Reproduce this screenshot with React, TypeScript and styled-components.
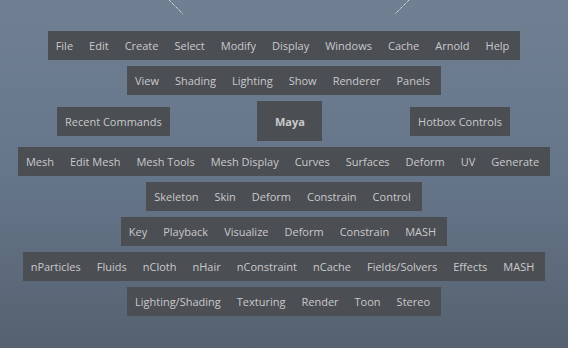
import React from "react";
import styled, {createGlobalStyle} from "styled-components";

const GlobalStyle = createGlobalStyle`
  html, body {
    margin: 0;
    padding: 0;
  }
  body {
    font-family: "Open Sans", "Noto Sans", sans-serif;
  }
`

const Screen = styled.div`
  position: relative;
  width: 568px;
  height: 348px;
  overflow: hidden;
  box-sizing: border-box;
  padding-top: 31px;
  background: linear-gradient(180deg, #707f92 0%, #66768a 50%, #556170 100%);
  display: flex;
  flex-direction: column;
  align-items: center;
  row-gap: 6px;
`

const Guides = styled.svg`
  position: absolute;
  left: 0;
  top: 0;
  width: 568px;
  height: 20px;
  pointer-events: none;
`

const Bar = styled.div`
  display: flex;
  height: 29px;
  align-items: center;
  padding: 0 3px 0 0;
  background: #4b4e53;
`

const Item = styled.span`
  padding: 0 8px;
  font-size: 11px;
  line-height: 29px;
  color: #c9cacb;
  white-space: nowrap;
`

const CenterRow = styled.div`
  width: 568px;
  height: 40px;
  display: flex;
  align-items: center;
  box-sizing: border-box;
  padding: 0 58px 0 57px;
  justify-content: space-between;
`

const Tile = styled.div<{ $big?: boolean }>`
  display: flex;
  align-items: center;
  justify-content: center;
  height: ${p => (p.$big ? "40px" : "29px")};
  width: ${p => (p.$big ? "65px" : "auto")};
  padding: ${p => (p.$big ? "0" : "0 8px")};
  background: #4b4e53;
  font-size: 11px;
  font-weight: ${p => (p.$big ? 700 : 400)};
  color: #c9cacb;
  white-space: nowrap;
`

const rows: string[][] = [
    ["File", "Edit", "Create", "Select", "Modify", "Display", "Windows", "Cache", "Arnold", "Help"],
    ["View", "Shading", "Lighting", "Show", "Renderer", "Panels"],
]

const lowerRows: string[][] = [
    ["Mesh", "Edit Mesh", "Mesh Tools", "Mesh Display", "Curves", "Surfaces", "Deform", "UV", "Generate"],
    ["Skeleton", "Skin", "Deform", "Constrain", "Control"],
    ["Key", "Playback", "Visualize", "Deform", "Constrain", "MASH"],
    ["nParticles", "Fluids", "nCloth", "nHair", "nConstraint", "nCache", "Fields/Solvers", "Effects", "MASH"],
    ["Lighting/Shading", "Texturing", "Render", "Toon", "Stereo"],
]

const MenuBar = ({items}: { items: string[] }) => (
    <Bar>
        {items.map((label, i) => <Item key={i}>{label}</Item>)}
    </Bar>
)

export default function App() {
    return (
        <>
            <GlobalStyle/>
            <Screen>
                <Guides viewBox="0 0 568 20">
                    <line x1="169" y1="0" x2="183" y2="14" stroke="#ffffff" strokeWidth="1" strokeDasharray="1 1"/>
                    <line x1="409" y1="0" x2="395" y2="14" stroke="#ffffff" strokeWidth="1" strokeDasharray="1 1"/>
                </Guides>
                {rows.map((r, i) => <MenuBar key={i} items={r}/>)}
                <CenterRow>
                    <Tile>Recent Commands</Tile>
                    <Tile $big>Maya</Tile>
                    <Tile>Hotbox Controls</Tile>
                </CenterRow>
                {lowerRows.map((r, i) => <MenuBar key={i} items={r}/>)}
            </Screen>
        </>
    )
}
